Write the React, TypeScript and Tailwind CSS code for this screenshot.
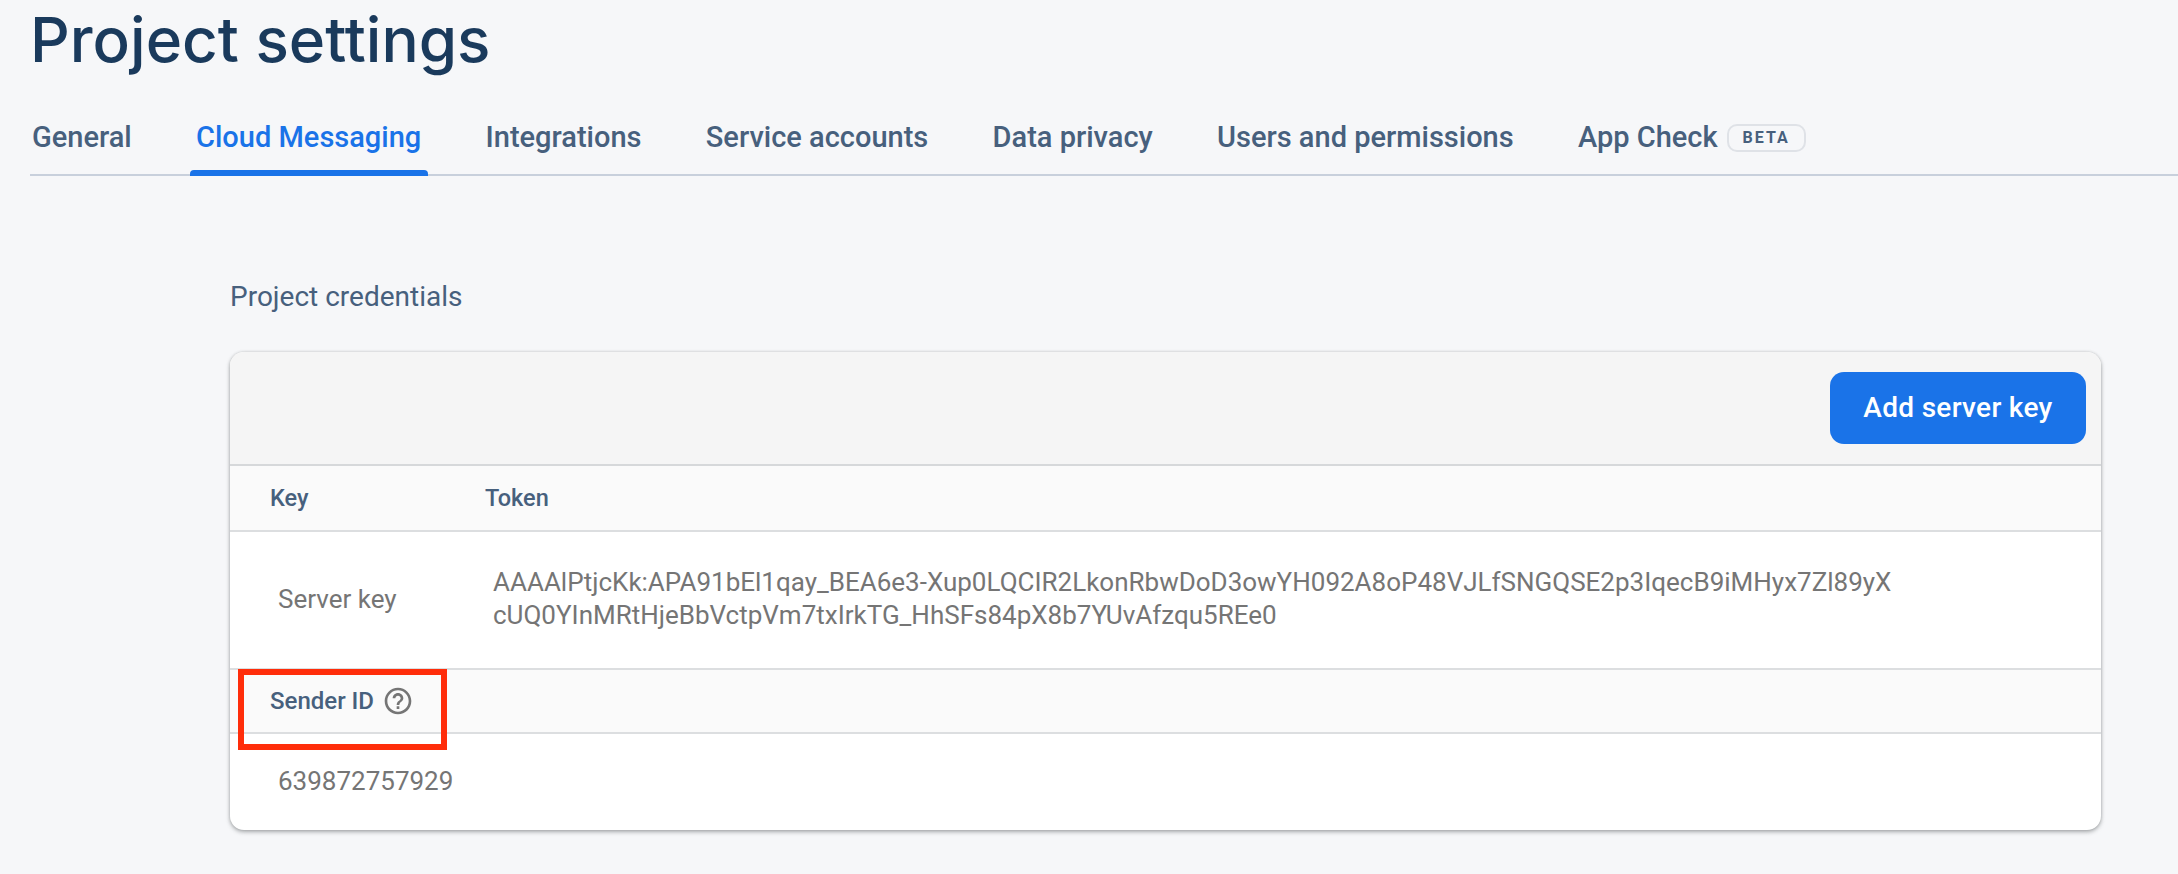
const tabs = ['General', 'Cloud Messaging', 'Integrations', 'Service accounts', 'Data privacy', 'Users and permissions'];

function HelpIcon() {
  return (
    <svg width="32" height="32" viewBox="0 0 24 24" fill="#757575">
      <path d="M11 18h2v-2h-2v2zm1-16C6.48 2 2 6.48 2 12s4.48 10 10 10 10-4.48 10-10S17.52 2 12 2zm0 18c-4.41 0-8-3.59-8-8s3.59-8 8-8 8 3.59 8 8-3.59 8-8 8zm0-14c-2.21 0-4 1.79-4 4h2c0-1.1.9-2 2-2s2 .9 2 2c0 2-3 1.75-3 5h2c0-2.25 3-2.5 3-5 0-2.21-1.79-4-4-4z" />
    </svg>
  );
}

export default function App() {
  return (
    <div className="w-[2178px] h-[874px] overflow-hidden bg-[#f6f7f9] font-['Roboto',sans-serif]">
      {/* Title and tabs */}
      <div className="pl-[30px] pt-[5px]">
        <h1 className="h-[70px] text-[62px] leading-[70px] font-medium text-[#1a3a5c] font-['Inter',sans-serif]">Project settings</h1>
        <div className="mt-[31px] h-[70px] pl-[2px] flex items-end border-b-2 border-[#c8d0dc]">
          {tabs.map((tab) => (
            <div
              key={tab}
              className={`relative h-[70px] mr-[64.3px] flex items-center pb-[3px] text-[29px] font-medium ${tab === 'Cloud Messaging' ? 'text-[#1a73e8]' : 'text-[#47607d]'}`}
            >
              {tab}
              {tab === 'Cloud Messaging' && (
                <div className="absolute left-[-6px] right-[-7px] bottom-[-2px] h-[6px] rounded-t-[4px] bg-[#1a73e8]" />
              )}
            </div>
          ))}
          <div className="h-[70px] flex items-center pb-[3px] text-[29px] font-medium text-[#47607d]">
            App Check
            <span className="ml-[9px] h-[28px] w-[79px] flex items-center justify-center rounded-[10px] border-2 border-[#dfe2e7] text-[16px] font-bold tracking-[2px] text-[#47607d]">BETA</span>
          </div>
        </div>
      </div>

      {/* Credentials */}
      <div className="pl-[230px] pr-[77px]">
        <h2 className="mt-[105px] h-[32px] text-[28px] leading-[32px] text-[#47607d]">Project credentials</h2>
        <div className="relative mt-[39px] h-[478px] rounded-[14px] bg-white shadow-[0_2px_4px_rgba(60,64,67,0.4),0_0_3px_rgba(60,64,67,0.2)]">
          <div className="h-[114px] rounded-t-[14px] bg-[#f5f5f5] border-b-2 border-[#d6d8da] flex items-center justify-end pr-[15px]">
            <button className="h-[72px] w-[256px] rounded-[14px] bg-[#1a73e8] text-white text-[28px] tracking-[0.3px] font-medium">Add server key</button>
          </div>
          <div className="h-[66px] pt-[1px] bg-[#fafafa] border-b-2 border-[#dcdee0] flex items-center text-[23.5px] font-medium text-[#47607d]">
            <div className="w-[255px] pl-[40px]">Key</div>
            <div>Token</div>
          </div>
          <div className="h-[138px] pb-[2px] flex items-center text-[26px] leading-[33px] text-[#757575] border-b-2 border-[#dcdee0]">
            <div className="w-[263px] pl-[48px] shrink-0">Server key</div>
            <div>
              AAAAlPtjcKk:APA91bEl1qay_BEA6e3-Xup0LQCIR2LkonRbwDoD3owYH092A8oP48VJLfSNGQSE2p3IqecB9iMHyx7Zl89yX<br />
              cUQ0YInMRtHjeBbVctpVm7txIrkTG_HhSFs84pX8b7YUvAfzqu5REe0
            </div>
          </div>
          <div className="h-[64px] bg-[#fafafa] border-b-2 border-[#dcdee0] flex items-center pl-[40px] text-[24px] font-medium text-[#47607d]">
            Sender ID
            <span className="ml-[8px] flex"><HelpIcon /></span>
          </div>
          <div className="h-[94px] flex items-center pl-[48px] text-[26px] text-[#757575]">639872757929</div>
          {/* Red annotation box */}
          <div className="absolute left-[8px] top-[317px] w-[209px] h-[81px] border-[6px] border-[#ff2d0a]" />
        </div>
      </div>
    </div>
  );
}
